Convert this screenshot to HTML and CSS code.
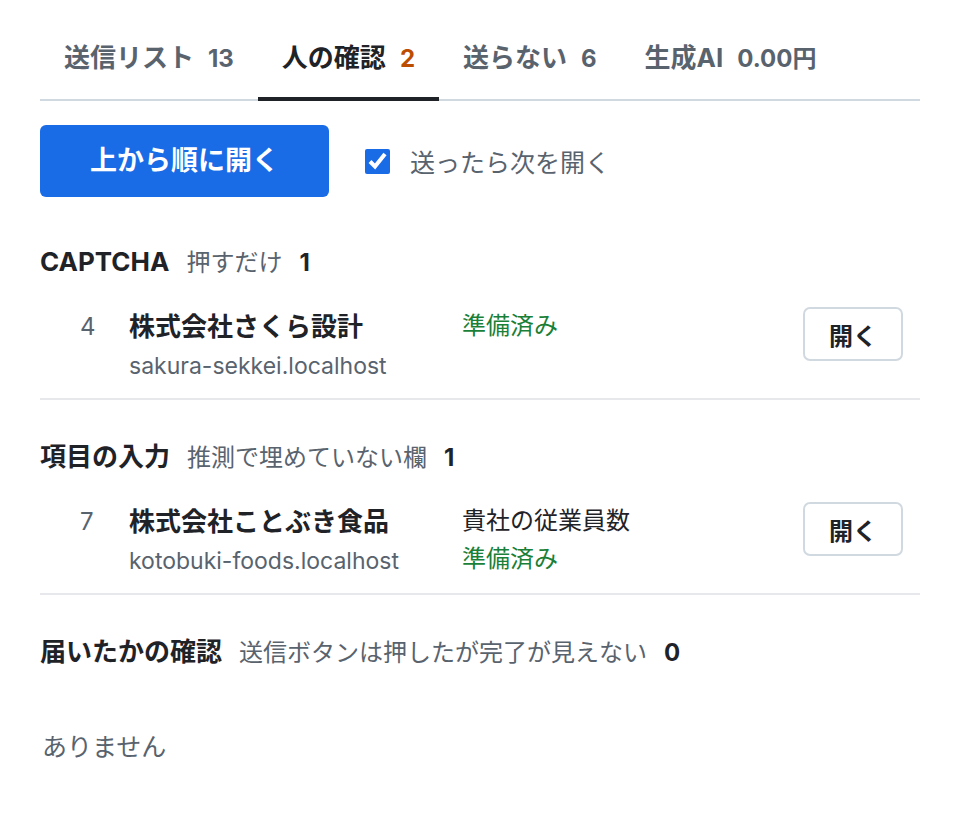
FILE: index.html
```html
<!DOCTYPE html>
<html lang="ja">
<head>
<meta charset="utf-8">
<title>人の確認</title>
<link rel="stylesheet" href="styles.css">
</head>
<body>
<div class="page">
  <nav class="tabs">
    <a class="tab">送信リスト<span class="count">13</span></a>
    <a class="tab active">人の確認<span class="count attn">2</span></a>
    <a class="tab">送らない<span class="count">6</span></a>
    <a class="tab">生成AI<span class="count">0.00円</span></a>
  </nav>

  <div class="toolbar">
    <button class="primary">上から順に開く</button>
    <label class="check"><input type="checkbox" checked><span>送ったら次を開く</span></label>
  </div>

  <section class="group">
    <h2 class="group-head"><span class="group-title">CAPTCHA</span><span class="group-desc">押すだけ</span><span class="group-count">1</span></h2>
    <div class="item">
      <span class="item-no">4</span>
      <div class="item-main">
        <div class="item-name">株式会社さくら設計</div>
        <div class="item-url">sakura-sekkei.localhost</div>
      </div>
      <div class="item-status">
        <div class="ok">準備済み</div>
      </div>
      <button class="open">開く</button>
    </div>
  </section>

  <section class="group">
    <h2 class="group-head"><span class="group-title">項目の入力</span><span class="group-desc">推測で埋めていない欄</span><span class="group-count">1</span></h2>
    <div class="item">
      <span class="item-no">7</span>
      <div class="item-main">
        <div class="item-name">株式会社ことぶき食品</div>
        <div class="item-url">kotobuki-foods.localhost</div>
      </div>
      <div class="item-status">
        <div class="field">貴社の従業員数</div>
        <div class="ok">準備済み</div>
      </div>
      <button class="open">開く</button>
    </div>
  </section>

  <section class="group">
    <h2 class="group-head"><span class="group-title">届いたかの確認</span><span class="group-desc">送信ボタンは押したが完了が見えない</span><span class="group-count">0</span></h2>
    <p class="empty">ありません</p>
  </section>
</div>
</body>
</html>
```

FILE: styles.css
```css
* { box-sizing: border-box; }

html, body {
  margin: 0;
  background: #ffffff;
}

body {
  font-family: "Inter", "Noto Sans CJK JP", sans-serif;
  color: #1f2328;
  font-size: 24px;
}

.page {
  padding: 16px 40px 0;
}

.tabs {
  display: flex;
  border-bottom: 2px solid #d1d9e0;
}

.tab {
  display: flex;
  align-items: baseline;
  gap: 14px;
  padding: 24px 24px 20px;
  line-height: 36px;
  font-size: 26px;
  font-weight: 700;
  color: #59636e;
  border-bottom: 4px solid transparent;
  margin-bottom: -2px;
}

.tab .count {
  font-size: 24px;
  font-weight: 700;
  color: #59636e;
}

.tab.active {
  color: #1f2328;
  border-bottom-color: #1f2328;
}

.tab .count.attn {
  color: #bc4c00;
}

.toolbar {
  display: flex;
  align-items: center;
  gap: 36px;
  padding-top: 24px;
  padding-bottom: 8px;
}

.primary {
  font-family: inherit;
  font-size: 27px;
  font-weight: 700;
  line-height: 36px;
  padding: 18px 50px;
  color: #ffffff;
  background: #1a6be6;
  border: none;
  border-radius: 6px;
}

.check {
  display: flex;
  align-items: center;
  gap: 20px;
  font-size: 25px;
  color: #59636e;
}

.check input {
  width: 25px;
  height: 25px;
  margin: 0;
  accent-color: #1a6be6;
}

.group {
  margin-top: 39px;
}

.group-head {
  display: flex;
  align-items: baseline;
  gap: 17px;
  margin: 0;
  line-height: 36px;
  font-size: 26px;
  font-weight: 700;
}

.group-desc {
  font-size: 24px;
  font-weight: 400;
  color: #59636e;
}

.group-count {
  font-size: 24px;
  font-weight: 700;
}

.item {
  display: grid;
  grid-template-columns: 49px 333px 1fr auto;
  align-items: start;
  padding: 26px 17px 13px 40px;
  border-bottom: 2px solid #e6e8eb;
}

.item-no {
  line-height: 40px;
  color: #59636e;
}

.item-name {
  font-size: 26px;
  font-weight: 700;
  line-height: 40px;
}

.item-url {
  font-size: 23px;
  line-height: 38px;
  color: #59636e;
}

.item-status {
  line-height: 38px;
}

.ok {
  color: #1a7f37;
}

.open {
  width: 100px;
  height: 54px;
  font-family: inherit;
  font-size: 24px;
  font-weight: 700;
  color: #1f2328;
  background: #ffffff;
  border: 2px solid #d1d9e0;
  border-radius: 7px;
}

.empty {
  margin: 58px 0 0 2px;
  line-height: 36px;
  font-size: 25px;
  color: #59636e;
}
```
